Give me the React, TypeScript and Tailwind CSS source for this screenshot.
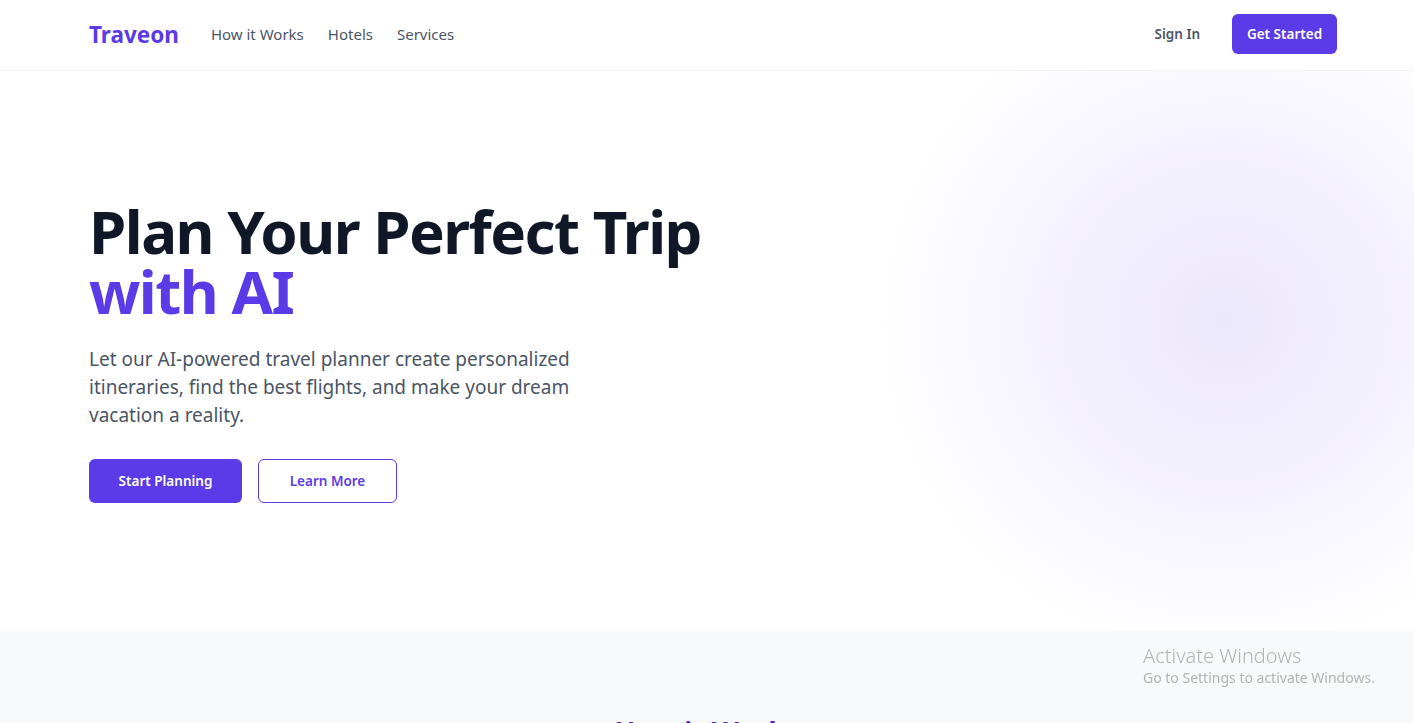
export default function App() {
  const links = ['How it Works', 'Hotels', 'Services'];

  return (
    <div className="min-h-screen bg-white font-['Noto_Sans',sans-serif]">
      <header className="border-b border-gray-100 bg-white">
        <nav className="flex h-[70px] items-center justify-between pl-[89px] pr-[77px]">
          <div className="-mt-px flex items-center">
            <span className="text-[22.5px] font-bold text-[#5b3ae8]">Traveon</span>
            <div className="ml-8 flex items-center gap-6">
              {links.map((l) => (
                <a key={l} href="#" className="text-[15px] text-gray-600">
                  {l}
                </a>
              ))}
            </div>
          </div>
          <div className="flex items-center gap-8">
            <a href="#" className="-mt-px text-[13.5px] font-semibold text-gray-600">
              Sign In
            </a>
            <button className="-mt-0.5 h-10 w-[105px] rounded-md bg-[#5b3ae8] text-[13.5px] font-semibold text-white">
              Get Started
            </button>
          </div>
        </nav>
      </header>

      <section className="flex h-[560px] items-center bg-[radial-gradient(ellipse_350px_340px_at_1225px_250px,#ece8fc_0%,#f3f0fd_45%,#fcfcff_85%,#ffffff_100%)] pl-[89px]">
        <div className="mt-0.5">
          <h1 className="text-6xl leading-none font-bold tracking-tight text-gray-900">
            Plan Your Perfect Trip
            <br />
            <span className="text-[#5b3ae8]">with AI</span>
          </h1>
          <p className="mt-6 max-w-lg text-[19px] leading-7 text-gray-600">
            Let our AI-powered travel planner create personalized itineraries, find the best flights, and make your
            dream vacation a reality.
          </p>
          <div className="mt-[30px] flex gap-4">
            <button className="h-11 w-[153px] rounded-md bg-[#5b3ae8] text-[13.5px] font-semibold text-white">
              Start Planning
            </button>
            <button className="h-11 w-[139px] rounded-md border border-[#5b3ae8] bg-white text-[13.5px] font-semibold text-[#5b3ae8]">
              Learn More
            </button>
          </div>
        </div>
      </section>

      <section className="bg-[#f8f9fb] pt-[80px] pb-20">
        <h2 className="text-center text-[28px] font-bold text-[#5b21d0]">How it Works</h2>
      </section>

      <div className="pointer-events-none fixed top-[644px] left-[1143px] text-[#b4b4b4]">
        <div className="text-xl leading-6 font-light">Activate Windows</div>
        <div className="text-sm">Go to Settings to activate Windows.</div>
      </div>
    </div>
  );
}
